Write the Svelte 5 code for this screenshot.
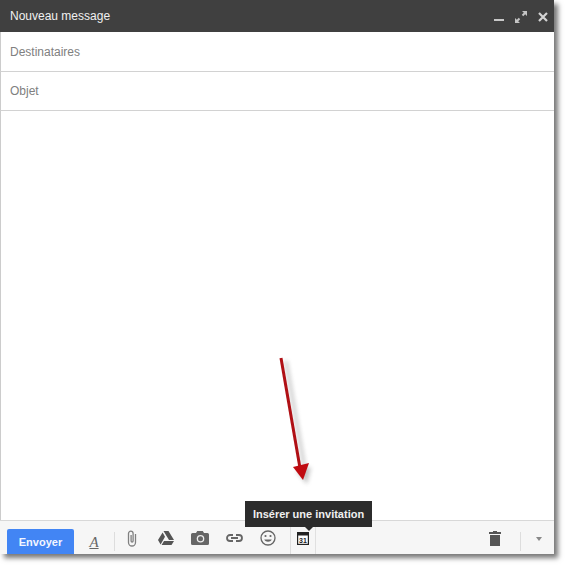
<script>
    let tools = ["clip", "drive", "photo", "link", "smile"];
</script>

<div class="page">
    <div class="compose">
        <header class="title">
            <span>Nouveau message</span>
            <div class="winbtns">
                <svg width="12" height="12" viewBox="0 0 12 12"><rect x="1" y="8" width="10" height="2" fill="#c8c8c8" /></svg>
                <svg width="12" height="12" viewBox="0 0 12 12" fill="#c4c4c4">
                    <path d="M7 0h5v5l-1.8-1.8-2 2-1.4-1.4 2-2zM5 12H0V7l1.800 1.800 2-2 1.400 1.400-2 2z" />
                </svg>
                <svg width="12" height="12" viewBox="0 0 12 12"><path d="M2 2l8 8M10 2l-8 8" stroke="#d4d4d4" stroke-width="2.200" /></svg>
            </div>
        </header>

        <div class="field">Destinataires</div>
        <div class="field">Objet</div>
        <div class="body"></div>

        <footer class="bar">
            <button class="send">Envoyer</button>
            <span class="fmt">A</span>
            <i class="sep"></i>
            {#each tools as t}
                <span class="tool">
                    {#if t === "clip"}
                        <svg width="12" height="17" viewBox="0 0 12 17" fill="none" stroke="#808080" stroke-width="1.300">
                            <path d="M9.500 4v8.500a3.500 3.500 0 0 1-7 0V3.500a2.300 2.300 0 0 1 4.600 0V11a1 1 0 0 1-2 0V5" />
                        </svg>
                    {:else if t === "drive"}
                        <svg width="16" height="14" viewBox="0 0 16 14" fill="#555">
                            <path d="M5.500 0h5l5.500 9h-5zM4.600 1.500L7 5.800 2.600 13.500 0 9zM6 10h10l-2.500 4H3.600z" />
                        </svg>
                    {:else if t === "photo"}
                        <svg width="18" height="14" viewBox="0 0 18 14">
                            <path d="M1.500 2H5l1.200-2h5.600L13 2h3.500A1.500 1.500 0 0 1 18 3.500v9a1.500 1.500 0 0 1-1.500 1.500h-15A1.500 1.500 0 0 1 0 12.500v-9A1.500 1.500 0 0 1 1.500 2z" fill="#666" />
                            <circle cx="9.500" cy="7.800" r="3.800" fill="#eee" />
                            <circle cx="9.500" cy="7.800" r="2.500" fill="#666" />
                        </svg>
                    {:else if t === "link"}
                        <svg width="17" height="8" viewBox="0 0 17 8" fill="none" stroke="#666" stroke-width="1.800">
                            <path d="M7 1H4a3 3 0 0 0 0 6h3M10 1h3a3 3 0 0 1 0 6h-3M5 4h7" />
                        </svg>
                    {:else}
                        <svg width="16" height="16" viewBox="0 0 16 16" fill="none" stroke="#666" stroke-width="1.300">
                            <circle cx="8" cy="8" r="7" />
                            <circle cx="5.500" cy="6" r="1.100" fill="#666" stroke="none" />
                            <circle cx="10.500" cy="6" r="1.100" fill="#666" stroke="none" />
                            <path d="M4.200 9.500c1.500 3 6.100 3 7.600 0z" fill="#666" stroke="none" />
                        </svg>
                    {/if}
                </span>
            {/each}
            <i class="sep short"></i>
            <span class="tool cal">
                <svg width="12" height="13" viewBox="0 0 12 13">
                    <rect x=".6" y=".6" width="10.800" height="11.800" fill="#fff" stroke="#222" stroke-width="1.200" />
                    <rect x="1" y="1" width="10" height="2.500" fill="#222" />
                    <text x="6" y="10.500" text-anchor="middle" class="calnum">31</text>
                </svg>
            </span>
            <span class="spacer"></span>
            <span class="tool trash">
                <svg width="12" height="15" viewBox="0 0 12 15" fill="#555">
                    <path d="M4 0h4v1h4v2H0V1h4zM1 4h10v11H1z" />
                </svg>
            </span>
            <i class="sep end"></i>
            <span class="caret"></span>
        </footer>

        <div class="tip">Insérer une invitation</div>

        <svg class="arrow" width="60" height="140" viewBox="0 0 60 140">
            <defs>
                <filter id="soft" x="-50%" y="-20%" width="200%" height="140%">
                    <feGaussianBlur stdDeviation="2" />
                </filter>
            </defs>
            <g opacity=".35" filter="url(#soft)" transform="translate(5 3)">
                <path d="M10 8L29 118" stroke="#555" stroke-width="3" />
                <path d="M20 118l15-4-4 17z" fill="#555" />
            </g>
            <path d="M10 8L29 118" stroke="#b01015" stroke-width="3" />
            <path d="M22 117l16-4-6 17z" fill="#c00a10" />
        </svg>
    </div>
</div>

<style>
    :global(body) {
        margin: 0;
        background: #fff;
    }

    .page {
        width: 568px;
        height: 568px;
        overflow: hidden;
        font-family: Arimo, "Liberation Sans", Arial, sans-serif;
    }

    .compose {
        position: relative;
        width: 554px;
        height: 554px;
        display: flex;
        flex-direction: column;
        background: #fff;
        box-shadow: 4px 4px 5px #777;
    }

    .title {
        flex: none;
        height: 32px;
        padding: 0 5px 0 10px;
        box-sizing: border-box;
        display: flex;
        align-items: center;
        justify-content: space-between;
        background: #404040;
        color: #f0f0f0;
        font-size: 12px;
        font-weight: 500;
    }

    .winbtns {
        display: flex;
        gap: 10px;
        margin-top: 1px;
    }

    .field {
        flex: none;
        height: 39px;
        padding-left: 9px;
        display: flex;
        align-items: center;
        border-bottom: 1px solid #d2d2d2;
        border-left: 1px solid #ccc;
        color: #808080;
        font-size: 12px;
        box-sizing: content-box;
    }

    .field + .field {
        height: 38px;
    }

    .body {
        flex: 1;
        border-left: 1px solid #ccc;
    }

    .bar {
        flex: none;
        height: 33px;
        display: flex;
        align-items: flex-end;
        padding-left: 7px;
        border-top: 1px solid #d8d8d8;
        background: #f6f6f6;
    }

    .send {
        width: 67px;
        height: 25px;
        border: 0;
        border-radius: 2px 2px 0 0;
        padding: 0;
        background: #4285f4;
        color: #f2f6ff;
        font: bold 11px "Liberation Sans", Arial, sans-serif;
    }

    .fmt {
        width: 40px;
        margin-bottom: 3px;
        text-align: center;
        font: italic 15px "Liberation Serif", serif;
        color: #666;
    }

    .fmt {
        text-decoration: underline;
    }

    .sep {
        width: 1px;
        height: 19px;
        margin-bottom: 3px;
        background: #ddd;
    }

    .sep.short {
        height: 32px;
        margin: 0 0 0 5px;
    }

    .sep.end {
        margin-left: 14px;
    }

    .tool {
        width: 34px;
        height: 32px;
        display: flex;
        align-items: center;
        justify-content: center;
        flex: none;
    }

    .tool:first-of-type {
        width: 42px;
    }

    .cal {
        width: 24px;
        border-right: 1px solid #e0e0e0;
    }

    .calnum {
        font: bold 7px "Liberation Sans", sans-serif;
        fill: #222;
    }

    .spacer {
        flex: 1;
    }

    .trash {
        width: 22px;
    }

    .caret {
        width: 0;
        height: 0;
        margin: 0 12px 13px 15px;
        border: 3.500px solid transparent;
        border-top: 4px solid #888;
        border-bottom: 0;
    }

    .tip {
        position: absolute;
        left: 245px;
        top: 501px;
        width: 127px;
        height: 26px;
        display: flex;
        align-items: center;
        justify-content: center;
        background: #2c2c2c;
        color: #f0f0f0;
        font-size: 11px;
        font-weight: bold;
    }

    .tip::after {
        content: "";
        position: absolute;
        left: 60px;
        bottom: -4px;
        border: 4px solid transparent;
        border-top-color: #2c2c2c;
        border-bottom: 0;
    }

    .arrow {
        position: absolute;
        left: 271px;
        top: 350px;
    }
</style>
